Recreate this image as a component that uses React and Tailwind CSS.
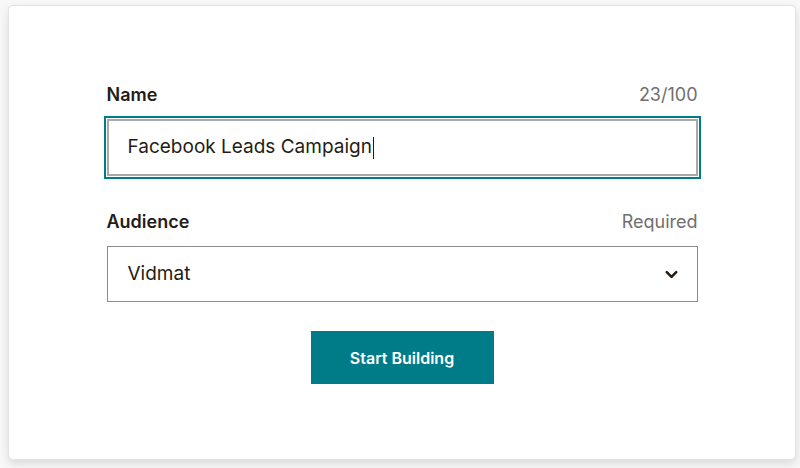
import React from 'react';
import { ChevronDown } from 'lucide-react';

const FONT = { fontFamily: 'Inter, "Liberation Sans", sans-serif' };

function FieldLabel({ label, hint }) {
  return (
    <div className="flex items-baseline justify-between mb-[12px] leading-[24px]">
      <span className="text-[18px] font-semibold text-[#241c15]">{label}</span>
      <span className="text-[18px] text-[#6f6f6f]">{hint}</span>
    </div>
  );
}

export default function App() {
  return (
    <div className="w-[800px] h-[468px] bg-[#f8f8f8] pt-[5px] pl-[8px]" style={FONT}>
      <div className="w-[788px] h-[455px] bg-white rounded-[5px] border border-[#e2e2e2] shadow-[0_4px_10px_rgba(0,0,0,0.12)] flex flex-col items-center pt-[77px]">
        <div className="w-[591px] flex flex-col">
          {/* name */}
          <FieldLabel label="Name" hint="23/100" />
          <div className="h-[57px] border-2 border-[#a9a9a9] outline-2 outline-[#007c89] outline-offset-[1px] flex items-center pl-[19px]">
            <span className="text-[19px] text-[#241c15]">Facebook Leads Campaign</span>
            <span className="w-px h-[22px] bg-[#241c15] ml-px" />
          </div>

          {/* audience */}
          <div className="mt-[34px]">
            <FieldLabel label="Audience" hint="Required" />
          </div>
          <div className="h-[56px] border border-[#8c8c8c] flex items-center justify-between pl-[20px] pr-[16px]">
            <span className="text-[19px] text-[#241c15]">Vidmat</span>
            <ChevronDown className="w-[19px] h-[19px] text-[#241c15]" strokeWidth={3.2} />
          </div>

          {/* action */}
          <div className="flex justify-center mt-[29px]">
            <button className="w-[183px] h-[53px] bg-[#007c89] text-white text-[16px] font-semibold">
              Start Building
            </button>
          </div>
        </div>
      </div>
    </div>
  );
}
